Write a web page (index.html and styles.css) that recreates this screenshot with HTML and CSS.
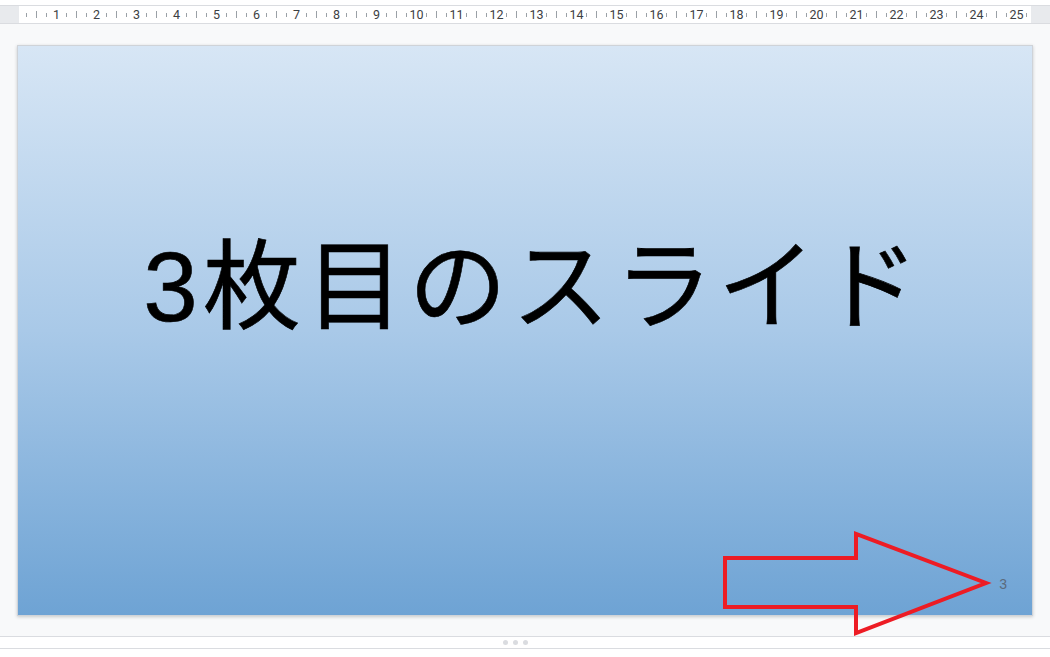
FILE: index.html
```html
<!DOCTYPE html>
<html lang="ja">
<head>
<meta charset="utf-8">
<link rel="stylesheet" href="styles.css">
</head>
<body>
<div class="ruler-row">
  <div class="ruler-side"></div>
  <div class="ruler">
    <i class="s"></i><i class="l"></i><i class="s"></i><b>1</b>
    <i class="s"></i><i class="l"></i><i class="s"></i><b>2</b>
    <i class="s"></i><i class="l"></i><i class="s"></i><b>3</b>
    <i class="s"></i><i class="l"></i><i class="s"></i><b>4</b>
    <i class="s"></i><i class="l"></i><i class="s"></i><b>5</b>
    <i class="s"></i><i class="l"></i><i class="s"></i><b>6</b>
    <i class="s"></i><i class="l"></i><i class="s"></i><b>7</b>
    <i class="s"></i><i class="l"></i><i class="s"></i><b>8</b>
    <i class="s"></i><i class="l"></i><i class="s"></i><b>9</b>
    <i class="s"></i><i class="l"></i><i class="s"></i><b>10</b>
    <i class="s"></i><i class="l"></i><i class="s"></i><b>11</b>
    <i class="s"></i><i class="l"></i><i class="s"></i><b>12</b>
    <i class="s"></i><i class="l"></i><i class="s"></i><b>13</b>
    <i class="s"></i><i class="l"></i><i class="s"></i><b>14</b>
    <i class="s"></i><i class="l"></i><i class="s"></i><b>15</b>
    <i class="s"></i><i class="l"></i><i class="s"></i><b>16</b>
    <i class="s"></i><i class="l"></i><i class="s"></i><b>17</b>
    <i class="s"></i><i class="l"></i><i class="s"></i><b>18</b>
    <i class="s"></i><i class="l"></i><i class="s"></i><b>19</b>
    <i class="s"></i><i class="l"></i><i class="s"></i><b>20</b>
    <i class="s"></i><i class="l"></i><i class="s"></i><b>21</b>
    <i class="s"></i><i class="l"></i><i class="s"></i><b>22</b>
    <i class="s"></i><i class="l"></i><i class="s"></i><b>23</b>
    <i class="s"></i><i class="l"></i><i class="s"></i><b>24</b>
    <i class="s"></i><i class="l"></i><i class="s"></i><b>25</b>
    <i class="s"></i>
  </div>
  <div class="ruler-side right"></div>
</div>
<div class="canvas">
  <div class="slide">
    <div class="title">3枚目のスライド</div>
    <div class="page-num">3</div>
    <svg class="arrow" width="280" height="110" viewBox="0 0 280 110">
      <polygon points="12,31 143,31 143,7 273,56 143,106 143,80 12,80" fill="none" stroke="#ed1c24" stroke-width="4" stroke-linejoin="miter"/>
    </svg>
  </div>
</div>
<div class="notes-bar">
  <span class="dot"></span><span class="dot"></span><span class="dot"></span>
</div>
</body>
</html>
```
FILE: styles.css
```css
html, body {
  margin: 0;
  padding: 0;
}
body {
  width: 1050px;
  height: 657px;
  overflow: hidden;
  background: #ffffff;
  font-family: Roboto, "Liberation Sans", "Noto Sans CJK JP", sans-serif;
}
.ruler-row {
  margin-top: 5px;
  display: flex;
  height: 17px;
  border-top: 1px solid #dadce0;
  border-bottom: 1px solid #dadce0;
}
.ruler-side {
  width: 19px;
  background: #e8eaed;
  flex: none;
}
.ruler-side.right {
  width: 19px;
}
.ruler {
  flex: 1;
  display: flex;
  align-items: center;
  padding-left: 2.5px;
  overflow: hidden;
  background: #ffffff;
}
.ruler i, .ruler b {
  flex: none;
  width: 10px;
  display: flex;
  justify-content: center;
  position: relative;
  height: 17px;
  align-items: center;
}
.ruler i::before {
  content: "";
  width: 1px;
  background: #9aa0a6;
}
.ruler i.s::before {
  height: 4px;
}
.ruler i.l::before {
  height: 7px;
}
.ruler b {
  font-weight: normal;
  font-size: 12.5px;
  color: #3c4043;
  white-space: nowrap;
  line-height: 17px;
}
.canvas {
  height: 613px;
  background: #f8f9fa;
  padding: 21px 0 0 17px;
  box-sizing: border-box;
  border-bottom: 1px solid #dadce0;
}
.slide {
  position: relative;
  width: 1016px;
  height: 571px;
  box-sizing: border-box;
  border: 1px solid #cfd3d8;
  background: linear-gradient(to bottom, #d7e6f5 0%, #a9c9e8 50%, #6ea3d4 100%);
  box-shadow: 0 1px 3px rgba(60, 64, 67, 0.25);
  display: flex;
  align-items: center;
  justify-content: center;
}
.title {
  font-family: "Liberation Sans", "Noto Sans CJK JP", sans-serif;
  font-size: 98px;
  color: #000000;
  line-height: 1;
  margin-top: -88px;
  letter-spacing: 5px;
  padding-left: 17px;
  -webkit-text-stroke: 0.6px #000;
}
.page-num {
  position: absolute;
  right: 25px;
  top: 530px;
  font-family: "Liberation Sans", sans-serif;
  font-size: 14px;
  color: #5b6b7d;
}
.arrow {
  position: absolute;
  left: 695px;
  top: 481px;
  overflow: visible;
}
.notes-bar {
  height: 11px;
  border-bottom: 1px solid #dadce0;
  display: flex;
  justify-content: center;
  align-items: center;
  gap: 5px;
  padding-right: 20px;
}
.dot {
  width: 5px;
  height: 5px;
  border-radius: 50%;
  background: #dadce0;
}
```
